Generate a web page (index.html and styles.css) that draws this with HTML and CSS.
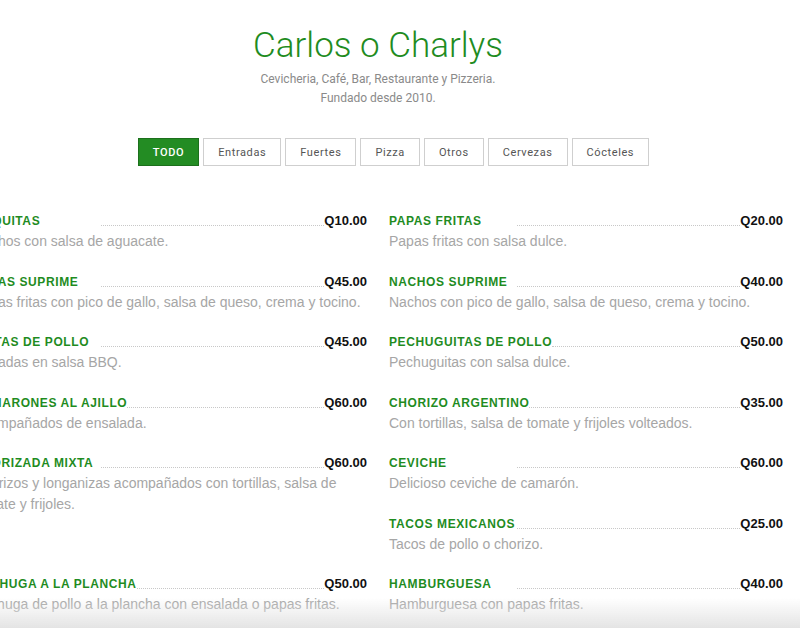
FILE: index.html
```html
<!DOCTYPE html>
<html lang="es">
<head>
<meta charset="utf-8">
<title>Carlos o Charlys</title>
<link rel="stylesheet" href="styles.css">
</head>
<body>
<div class="page">
  <header class="hero">
    <h1 class="title">Carlos o Charlys</h1>
    <p class="tagline">Cevicheria, Café, Bar, Restaurante y Pizzeria.<br>Fundado desde 2010.</p>
  </header>
  <nav class="filters">
    <button class="filter active">TODO</button>
    <button class="filter">Entradas</button>
    <button class="filter">Fuertes</button>
    <button class="filter">Pizza</button>
    <button class="filter">Otros</button>
    <button class="filter">Cervezas</button>
    <button class="filter">Cócteles</button>
  </nav>
  <section class="menu">
    <div class="item">
      <div class="head"><span class="name">Boquitas</span><span class="leader"></span><span class="price">Q10.00</span></div>
      <p class="desc">Nachos con salsa de aguacate.</p>
    </div>
    <div class="item">
      <div class="head"><span class="name">Papas fritas</span><span class="leader"></span><span class="price">Q20.00</span></div>
      <p class="desc">Papas fritas con salsa dulce.</p>
    </div>
    <div class="item">
      <div class="head"><span class="name">Papas suprime</span><span class="leader"></span><span class="price">Q45.00</span></div>
      <p class="desc">Papas fritas con pico de gallo, salsa de queso, crema y tocino.</p>
    </div>
    <div class="item">
      <div class="head"><span class="name">Nachos suprime</span><span class="leader"></span><span class="price">Q40.00</span></div>
      <p class="desc">Nachos con pico de gallo, salsa de queso, crema y tocino.</p>
    </div>
    <div class="item">
      <div class="head"><span class="name">Alitas de pollo</span><span class="leader"></span><span class="price">Q45.00</span></div>
      <p class="desc">Bañadas en salsa BBQ.</p>
    </div>
    <div class="item">
      <div class="head"><span class="name">Pechuguitas de pollo</span><span class="leader"></span><span class="price">Q50.00</span></div>
      <p class="desc">Pechuguitas con salsa dulce.</p>
    </div>
    <div class="item">
      <div class="head"><span class="name">Camarones al ajillo</span><span class="leader"></span><span class="price">Q60.00</span></div>
      <p class="desc">Acompañados de ensalada.</p>
    </div>
    <div class="item">
      <div class="head"><span class="name">Chorizo argentino</span><span class="leader"></span><span class="price">Q35.00</span></div>
      <p class="desc">Con tortillas, salsa de tomate y frijoles volteados.</p>
    </div>
    <div class="item tall">
      <div class="head"><span class="name">Chorizada mixta</span><span class="leader"></span><span class="price">Q60.00</span></div>
      <p class="desc">Chorizos y longanizas acompañados con tortillas, salsa de tomate y frijoles.</p>
    </div>
    <div class="item">
      <div class="head"><span class="name">Ceviche</span><span class="leader"></span><span class="price">Q60.00</span></div>
      <p class="desc">Delicioso ceviche de camarón.</p>
    </div>
    <div class="item">
      <div class="head"><span class="name">Tacos mexicanos</span><span class="leader"></span><span class="price">Q25.00</span></div>
      <p class="desc">Tacos de pollo o chorizo.</p>
    </div>
    <div class="item">
      <div class="head"><span class="name">Pechuga a la plancha</span><span class="leader"></span><span class="price">Q50.00</span></div>
      <p class="desc">Pechuga de pollo a la plancha con ensalada o papas fritas.</p>
    </div>
    <div class="item">
      <div class="head"><span class="name">Hamburguesa</span><span class="leader"></span><span class="price">Q40.00</span></div>
      <p class="desc">Hamburguesa con papas fritas.</p>
    </div>
  </section>
</div>
<div class="fade"></div>
</body>
</html>
```
FILE: styles.css
```css
* { box-sizing: border-box; }
html, body { margin: 0; padding: 0; background: #fff; }
body { overflow: hidden; font-family: "Liberation Sans", Arial, sans-serif; }

.page {
  width: 810px;
  margin-left: -27px;
  padding-top: 24px;
}

.hero { text-align: center; }
.title {
  margin: 0;
  font-family: Roboto, "Liberation Sans", sans-serif;
  font-weight: 300;
  font-size: 35px;
  line-height: 44px;
  color: #1f8c1f;
}
.tagline {
  margin: 2px 0 0;
  font-family: Roboto, "Liberation Sans", sans-serif;
  font-size: 12px;
  line-height: 19px;
  color: #8a8a8a;
}

.filters {
  display: flex;
  justify-content: center;
  gap: 4px;
  padding-left: 31px;
  margin-top: 30px;
}
.filter {
  height: 28px;
  padding: 0 14px;
  border: 1px solid #cfcfcf;
  background: #fff;
  font-family: Roboto, "Liberation Sans", sans-serif;
  font-size: 11px;
  letter-spacing: 0.6px;
  color: #555;
  cursor: pointer;
}
.filter.active {
  background: #238c23;
  border-color: #1c701c;
  color: #fff;
  font-weight: 500;
}

.menu {
  display: grid;
  grid-template-columns: 394px 394px;
  column-gap: 22px;
  margin-top: 45px;
}
.item { padding-bottom: 20px; }
.item.tall { grid-row: span 2; }

.head {
  display: flex;
  align-items: flex-end;
  height: 20px;
}
.name {
  min-width: 128px;
  font-weight: bold;
  font-size: 12px;
  line-height: 20px;
  letter-spacing: 0.6px;
  text-transform: uppercase;
  color: #1f8c1f;
  white-space: nowrap;
}
.leader {
  flex: 1;
  border-bottom: 1px dotted #c8c8c8;
  margin-bottom: 5px;
}
.price {
  font-size: 13px;
  line-height: 20px;
  font-weight: bold;
  color: #111;
}
.desc {
  margin: 0;
  font-size: 14px;
  line-height: 20.5px;
  color: #a6a6a6;
}

.fade {
  position: fixed;
  left: 0;
  right: 0;
  bottom: 0;
  height: 30px;
  background: linear-gradient(to bottom, rgba(255,255,255,0), #e4e4e4);
  pointer-events: none;
}
```
